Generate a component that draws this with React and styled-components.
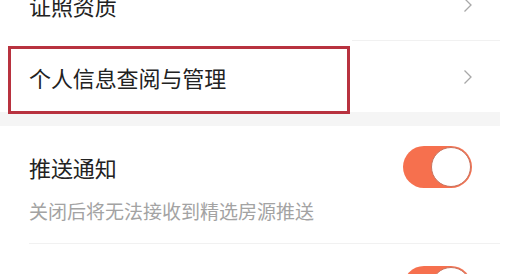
import React from 'react';
import styled, { createGlobalStyle } from 'styled-components';

const GlobalStyle = createGlobalStyle`
  html, body {
    margin: 0;
    padding: 0;
    background: #ffffff;
    overflow: hidden;
  }
  body {
    font-family: "Noto Sans CJK SC", "Noto Sans", sans-serif;
  }
`;

const Page = styled.div`
  width: 500px;
  margin-top: -31px;
`;

const Group = styled.div`
  background: #ffffff;
`;

const Row = styled.div`
  position: relative;
  display: flex;
  align-items: center;
  justify-content: space-between;
  height: 71px;
  padding: 0 27px 0 29px;
  box-sizing: border-box;
`;

const Divider = styled.div`
  height: 1px;
  margin-left: ${props => (props.inset ? '29px' : '0')};
  background: #f1f1f1;
`;

const Title = styled.span`
  font-size: 22px;
  line-height: 42px;
  color: #222222;
  letter-spacing: -0.1px;
`;

/* annotation frame drawn over the row */
const Highlight = styled.div`
  position: absolute;
  left: 8px;
  top: 5px;
  width: 342px;
  height: 68px;
  border: 3px solid #b8323f;
  box-sizing: border-box;
  box-shadow: 0 -5px 0 2px #ffffff;
  pointer-events: none;
`;

const Gap = styled.div`
  height: 14px;
  background: #f5f5f5;
`;

const SwitchRow = styled.div`
  display: flex;
  justify-content: space-between;
  align-items: flex-start;
  padding: ${props => props.top}px 28px 17px 29px;
`;

const TextCol = styled.div`
  display: flex;
  flex-direction: column;
  padding-top: ${props => props.shift || 0}px;
`;

const Hint = styled.span`
  margin-top: 8px;
  font-size: 19px;
  line-height: 30px;
  color: #a3a3a3;
`;

const Track = styled.div`
  width: 69px;
  height: 42px;
  border-radius: 21px;
  background: ${props => (props.on ? '#f6704e' : '#e6e6e6')};
  display: flex;
  align-items: center;
  justify-content: ${props => (props.on ? 'flex-end' : 'flex-start')};
  padding: 1px;
  box-sizing: border-box;
`;

const Knob = styled.div`
  width: 40px;
  height: 40px;
  border-radius: 50%;
  background: #ffffff;
  border: 1px solid #c77460;
  box-sizing: border-box;
`;

const Chevron = () => (
  <svg width="10" height="16" viewBox="0 0 10 16">
    <path d="M1.5 1.5 L8 8 L1.5 14.5" fill="none" stroke="#a8a8a8" strokeWidth="1.3" />
  </svg>
);

const Switch = ({ on }) => (
  <Track on={on}>
    <Knob />
  </Track>
);

const settings = [
  { title: '推送通知', hint: '关闭后将无法接收到精选房源推送', on: true, top: 20, shift: 0 },
  { title: '活动消息', hint: '关闭后将无法接收到活动优惠推送', on: true, top: 22, shift: 4 },
];

export default function App() {
  return (
    <>
      <GlobalStyle />
      <Page>
        <Group>
          <Row>
            <Title>证照资质</Title>
            <Chevron />
          </Row>
          <Divider inset />
          <Row>
            <Title>个人信息查阅与管理</Title>
            <Chevron />
            <Highlight />
          </Row>
        </Group>
        <Gap />
        <Group>
          {settings.map((s, i) => (
            <React.Fragment key={s.title}>
              {i > 0 && <Divider inset />}
              <SwitchRow top={s.top}>
                <TextCol shift={s.shift}>
                  <Title>{s.title}</Title>
                  <Hint>{s.hint}</Hint>
                </TextCol>
                <Switch on={s.on} />
              </SwitchRow>
            </React.Fragment>
          ))}
        </Group>
      </Page>
    </>
  );
}
